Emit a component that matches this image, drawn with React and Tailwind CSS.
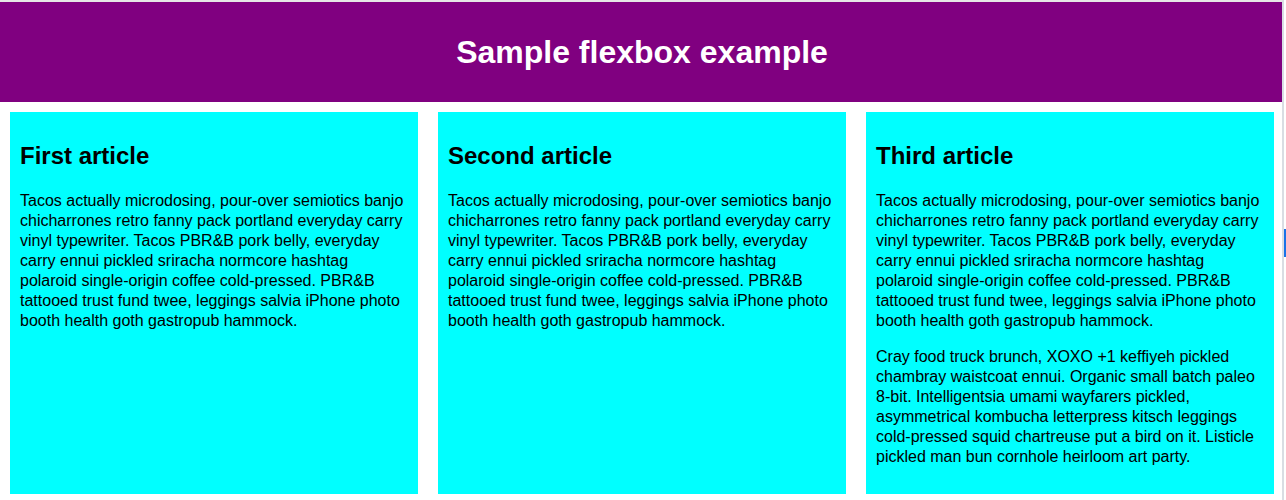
import React from "react";

const lorem =
  "Tacos actually microdosing, pour-over semiotics banjo chicharrones retro fanny pack portland everyday carry vinyl typewriter. Tacos PBR&B pork belly, everyday carry ennui pickled sriracha normcore hashtag polaroid single-origin coffee cold-pressed. PBR&B tattooed trust fund twee, leggings salvia iPhone photo booth health goth gastropub hammock.";

const extra =
  "Cray food truck brunch, XOXO +1 keffiyeh pickled chambray waistcoat ennui. Organic small batch paleo 8-bit. Intelligentsia umami wayfarers pickled, asymmetrical kombucha letterpress kitsch leggings cold-pressed squid chartreuse put a bird on it. Listicle pickled man bun cornhole heirloom art party.";

const articles = [
  { title: "First article", paras: [lorem] },
  { title: "Second article", paras: [lorem] },
  { title: "Third article", paras: [lorem, extra] },
];

const Article = ({ title, paras }) => (
  <article className="w-[408px] shrink-0 bg-[#00ffff] px-[10px] pt-[10px] pb-[11px] text-black">
    <h2 className="mt-[20px] mb-[21px] text-[24px] font-bold leading-[28px]">{title}</h2>
    {paras.map((p, i) => (
      <p key={i} className="mb-[16px] text-[16px] leading-[20px]">
        {p}
      </p>
    ))}
  </article>
);

export default function App() {
  return (
    <div
      className="flex h-[500px] w-full overflow-hidden bg-white"
      style={{ fontFamily: '"Liberation Sans", Arial, sans-serif' }}
    >
      <div className="flex w-[1282px] shrink-0 flex-col">
        <div className="h-[2px] bg-[#e6e6e6]" />
        {/* header */}
        <header className="flex h-[100px] items-center justify-center bg-[#800080]">
          <h1 className="pl-[2px] text-[32px] font-bold text-white">Sample flexbox example</h1>
        </header>
        {/* articles */}
        <section className="flex gap-[20px] px-[10px] pt-[10px]">
          {articles.map((a) => (
            <Article key={a.title} {...a} />
          ))}
        </section>
      </div>
      {/* scroll strip */}
      <div className="flex flex-1 bg-white">
        <div className="w-[2px] bg-[#d9dde3]" />
        <div className="flex flex-1 flex-col">
          <div className="h-[229px]" />
          <div className="h-[28px] bg-[#1a73e8]" />
        </div>
      </div>
    </div>
  );
}
